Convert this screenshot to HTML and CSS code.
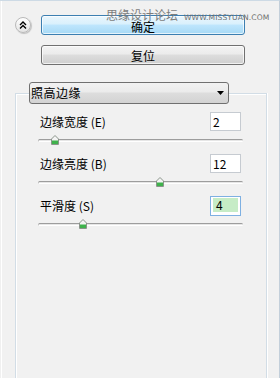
FILE: index.html
```html
<!DOCTYPE html>
<html>
<head>
<meta charset="utf-8">
<link rel="stylesheet" href="styles.css">
</head>
<body>
<div class="window">
  <div class="top">
    <div class="collapse">
      <svg width="8" height="8" viewBox="0 0 8 8"><path d="M1 4 L4 1 L7 4 M1 7.5 L4 4.5 L7 7.5" fill="none" stroke="#000" stroke-width="1.4"/></svg>
    </div>
    <div class="buttons">
      <div class="btn btn-default">确定</div>
      <div class="btn">复位</div>
    </div>
    <div class="watermark"><span class="wm-cn">思缘设计论坛</span><span class="wm-url">WWW.MISSYUAN.COM</span></div>
  </div>
  <div class="group">
    <div class="select"><span>照高边缘</span><svg width="7" height="4" viewBox="0 0 7 4"><path d="M0 0 H7 L3.5 4 Z" fill="#000"/></svg></div>
    <div class="field">
      <div class="line"><span class="label">边缘宽度 (E)</span><div class="input">2</div></div>
      <div class="slider"><div class="track"></div><svg class="thumb" style="left:13px" width="8" height="10" viewBox="0 0 8 10"><path d="M4 0.5 L7.5 4 V9.5 H0.5 V4 Z" fill="#f4f4f4" stroke="#8a948a"/><path d="M1 5.5 H7 V9 H1 Z" fill="#3fb24c"/></svg></div>
    </div>
    <div class="field">
      <div class="line"><span class="label">边缘亮度 (B)</span><div class="input">12</div></div>
      <div class="slider"><div class="track"></div><svg class="thumb" style="left:118px" width="8" height="10" viewBox="0 0 8 10"><path d="M4 0.5 L7.5 4 V9.5 H0.5 V4 Z" fill="#f4f4f4" stroke="#8a948a"/><path d="M1 5.5 H7 V9 H1 Z" fill="#3fb24c"/></svg></div>
    </div>
    <div class="field">
      <div class="line"><span class="label">平滑度 (S)</span><div class="input focus"><span class="sel">4</span></div></div>
      <div class="slider"><div class="track"></div><svg class="thumb" style="left:41px" width="8" height="10" viewBox="0 0 8 10"><path d="M4 0.5 L7.5 4 V9.5 H0.5 V4 Z" fill="#f4f4f4" stroke="#8a948a"/><path d="M1 5.5 H7 V9 H1 Z" fill="#3fb24c"/></svg></div>
    </div>
  </div>
</div>
</body>
</html>
```
FILE: styles.css
```css
* { box-sizing: border-box; }
html, body { margin: 0; padding: 0; }
body {
  background: #f0f0f0;
  font-family: "Noto Sans CJK SC", "Noto Sans", sans-serif;
  font-size: 12px;
  color: #000;
}
.window {
  width: 280px;
  height: 378px;
  display: flex;
  flex-direction: column;
  border-top: 1px solid #cddae5;
  border-right: 1px solid #c3cfda;
  box-shadow: inset 1px 0 0 #f0f0f0, inset 2px 0 0 #ffffff;
  background: #f1f1f1;
  overflow: hidden;
}
.top {
  position: relative;
  display: flex;
  padding: 14px 0 0 15px;
}
.collapse {
  width: 16px;
  height: 16px;
  margin-top: 2px;
  border-radius: 50%;
  border: 1px solid #b9b9b9;
  background: linear-gradient(#ffffff, #e4e4e4);
  box-shadow: 1px 1px 1px rgba(0,0,0,0.2);
  display: flex;
  align-items: center;
  justify-content: center;
}
.buttons {
  display: flex;
  flex-direction: column;
  gap: 10px;
  width: 204px;
  margin-left: 10px;
}
.btn {
  height: 20px;
  border: 1px solid #707070;
  border-radius: 3px;
  background: linear-gradient(#f3f3f3 0%, #ebebeb 45%, #dddddd 50%, #cfcfcf 100%);
  box-shadow: inset 0 0 0 1px rgba(255,255,255,0.7);
  display: flex;
  align-items: center;
  justify-content: center;
  line-height: 1;
  padding-top: 1px;
}
.btn-default {
  border-color: #3c7fb1;
  background: linear-gradient(#eaf6fd 0%, #d9f0fc 45%, #bee6fd 50%, #a7d9f5 100%);
  padding-top: 4px;
}
.watermark {
  position: absolute;
  left: 106px;
  top: 7px;
  display: flex;
  align-items: baseline;
  white-space: nowrap;
}
.wm-cn {
  font-size: 12px;
  color: #7d7d7d;
  line-height: 14px;
}
.wm-url {
  margin-left: 6px;
  font-family: "DejaVu Sans", sans-serif;
  font-size: 7.6px;
  color: #6f6f6f;
  letter-spacing: 0.1px;
}
.group {
  flex: 1;
  width: 252px;
  margin: 28px 0 0 15px;
  border: 1px solid #d2dde6;
  border-bottom: none;
  box-shadow: inset 1px 1px 0 #ffffff, 1px 0 0 #ffffff;
}
.select {
  width: 200px;
  height: 22px;
  margin: -12px 0 0 13px;
  border: 1px solid #707070;
  border-radius: 3px;
  background: linear-gradient(#f2f2f2 0%, #ebebeb 45%, #dddddd 50%, #d3d3d3 100%);
  display: flex;
  align-items: center;
  justify-content: space-between;
  padding: 0 4px 1px 1px;
  letter-spacing: 0.5px;
}
.field {
  margin: 8px 25px 0 24px;
  height: 33px;
}
.field + .field { margin-top: 9px; }
.line {
  height: 19px;
  display: flex;
  align-items: center;
  justify-content: space-between;
}
.label { line-height: 1; }
.input {
  width: 31px;
  height: 19px;
  border: 1px solid #c6cbd1;
  background: #fff;
  padding-left: 2px;
  font-size: 12px;
  line-height: 17px;
}
.input.focus {
  height: 20px;
  border-color: #7eb0e2;
  padding: 1px 2px 0 2px;
}
.sel {
  display: block;
  background: #c6ecc6;
  height: 14px;
  line-height: 14px;
  padding-left: 3px;
}
.slider {
  position: relative;
  height: 10px;
  margin: 4px -2px 0 -2px;
}
.track {
  position: absolute;
  left: 0;
  right: 0;
  top: 4px;
  height: 3px;
  border-top: 1px solid #9d9d9d;
  border-bottom: 1px solid #ffffff;
  border-left: 1px solid #bdbdbd;
  border-radius: 2px;
  background: #e6e6e6;
}
.thumb {
  position: absolute;
  top: 0;
}
```
